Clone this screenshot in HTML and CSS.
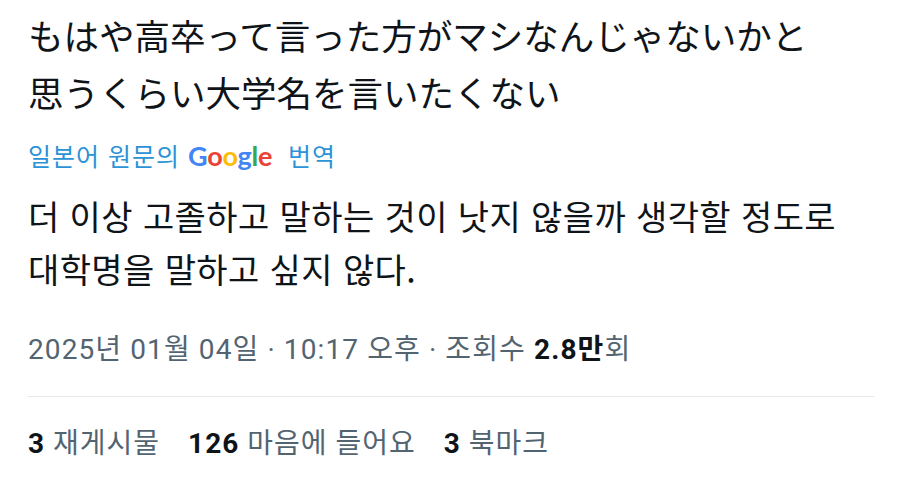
FILE: index.html
```html
<!DOCTYPE html>
<html lang="ko">
<head>
    <meta charset="UTF-8">
    <meta name="viewport" content="width=device-width, initial-scale=1.0">
    <title>게시물</title>
    <link rel="stylesheet" href="styles.css">
</head>
<body>
    <div class="tweet">
        <p class="original" lang="ja">もはや高卒って言った方がマシなんじゃないかと<br>思うくらい大学名を言いたくない</p>

        <div class="translate-label">
            <span>일본어 원문의</span>
            <span class="google"><span class="g-blue">G</span><span class="g-red">o</span><span class="g-yellow">o</span><span class="g-blue">g</span><span class="g-green">l</span><span class="g-red">e</span></span>
            <span>번역</span>
        </div>

        <p class="translated">더 이상 고졸하고 말하는 것이 낫지 않을까 생각할 정도로<br>대학명을 말하고 싶지 않다.</p>

        <div class="meta">2025년 01월 04일 · 10:17 오후 · 조회수 <strong>2.8만</strong>회</div>

        <div class="divider"></div>

        <div class="stats">
            <span class="stat"><strong>3</strong> 재게시물</span>
            <span class="stat"><strong>126</strong> 마음에 들어요</span>
            <span class="stat"><strong>3</strong> 북마크</span>
        </div>
    </div>
</body>
</html>
```

FILE: styles.css
```css
:root {
    --text-color: #0f1419;
    --muted-color: #536471;
    --link-color: #2b93d6;
    --border-color: #e6e9eb;
}
body {
    margin: 0;
    background: #fff;
    color: var(--text-color);
    font-family: Roboto, "Noto Sans CJK KR", sans-serif;
}
.tweet {
    padding: 6px 26px 0 28px;
}
.original {
    margin: 0;
    font-family: "Noto Sans CJK JP", sans-serif;
    font-size: 35.5px;
    line-height: 57px;
}
.translate-label {
    margin-top: 20px;
    display: flex;
    align-items: center;
    height: 30px;
    font-family: "Noto Sans CJK KR", sans-serif;
    font-size: 25px;
    letter-spacing: 1px;
    color: var(--link-color);
}
.google {
    margin: 0 16px 0 8px;
    font-family: Lato, "Open Sans", sans-serif;
    font-weight: 700;
    font-size: 27px;
    letter-spacing: -0.3px;
}
.g-blue { color: #4285f4; }
.g-red { color: #ea4335; }
.g-yellow { color: #fbbc05; }
.g-green { color: #34a853; }
.translated {
    margin: 19px 0 0;
    font-family: "Noto Sans CJK KR", sans-serif;
    font-size: 34px;
    letter-spacing: 0.4px;
    line-height: 53px;
}
.meta {
    margin-top: 37px;
    line-height: 36px;
    font-size: 28px;
    letter-spacing: 1.1px;
    color: var(--muted-color);
}
.meta strong {
    color: var(--text-color);
    font-weight: 700;
}
.divider {
    margin-top: 28px;
    border-top: 1px solid var(--border-color);
}
.stats {
    margin-top: 29px;
    display: flex;
    gap: 28px;
    line-height: 36px;
    font-size: 28px;
    letter-spacing: 1px;
    color: var(--muted-color);
}
.stats strong {
    color: var(--text-color);
    font-weight: 700;
}
```
